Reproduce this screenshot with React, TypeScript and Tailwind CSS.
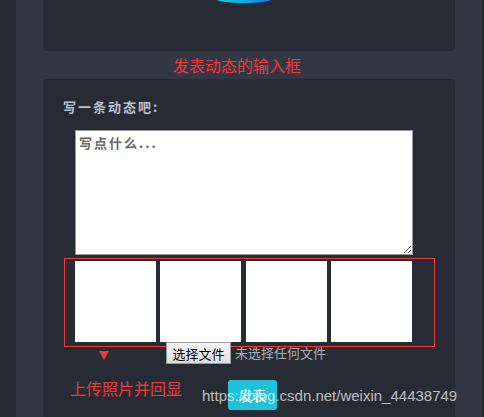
const previews = [0, 1, 2, 3];

export default function App() {
  return (
    <div
      className="flex h-[417px] w-[484px] overflow-hidden bg-[#262a33] pl-[16px] pr-[2px]"
      style={{ fontFamily: '"Noto Sans CJK SC", "Liberation Sans", sans-serif' }}
    >
      <div className="flex flex-1 flex-col bg-[#333743] px-[27px]">
        {/* top card, only its bottom edge is visible */}
        <div className="flex h-[51px] shrink-0 justify-center overflow-hidden rounded-b-[4px] bg-[#272b34]">
          <div className="-mt-[5px] ml-[-10px] h-[8px] w-[56px] rounded-[50%] bg-gradient-to-r from-[#19d0e0] via-[#1aa8e4] to-[#1a6fe0]" />
        </div>

        <div className="flex h-[28px] shrink-0 items-center pl-[130px] text-[16px] leading-none text-[#f03a3a]">
          发表动态的输入框
        </div>

        <div className="relative flex flex-1 flex-col rounded-t-[4px] bg-[#272b34] pt-[20px]">
          <div className="pl-[20px] text-[13px] font-bold leading-[16px] tracking-[2px] text-[#b9c1cb]">
            写一条动态吧:
          </div>

          <textarea
            className="ml-[32px] mt-[15px] h-[125px] w-[338px] resize-y border border-[#999] bg-white px-[3px] py-[2px] text-[13px] font-bold tracking-[2px] text-[#444] placeholder:text-[#666] outline-none"
            placeholder="写点什么..."
          />

          <div className="ml-[32px] mt-[6px] flex gap-[4px]">
            {previews.map((i) => (
              <div key={i} className={`h-[81px] w-[81px] bg-white ${i === 1 ? "mr-[1px]" : ""}`} />
            ))}
          </div>

          {/* annotation box around the previews */}
          <div className="pointer-events-none absolute left-[21px] top-[179px] h-[89px] w-[371px] border border-[#f03a3a]" />

          <div className="relative z-10 flex items-center pl-[123px]">
            <button className="h-[22px] w-[65px] border border-[#9a9a9a] bg-gradient-to-b from-[#f6f6f6] to-[#dedede] text-[13px] leading-none text-black">
              选择文件
            </button>
            <span className="ml-[4px] text-[13px] text-[#a9b0bb]">未选择任何文件</span>
          </div>

          {/* annotation arrow and label */}
          <div className="absolute left-[56px] top-[272px] h-0 w-0 border-x-[5px] border-t-[9px] border-x-transparent border-t-[#f03a3a]" />
          <div className="absolute left-[27px] top-[301px] text-[16px] leading-none text-[#f03a3a]">
            上传照片并回显
          </div>

          <div className="mt-[16px] pl-[185px]">
            <button className="h-[30px] w-[49px] rounded-[3px] bg-[#1fc2d8] text-[14px] text-white">
              发表
            </button>
          </div>
        </div>
      </div>

      <div
        className="pointer-events-none absolute left-[202px] top-[388px] text-[15px] leading-none text-white/70"
        style={{ fontFamily: '"Liberation Sans", Arial, sans-serif' }}
      >
        https://blog.csdn.net/weixin_44438749
      </div>
    </div>
  );
}
